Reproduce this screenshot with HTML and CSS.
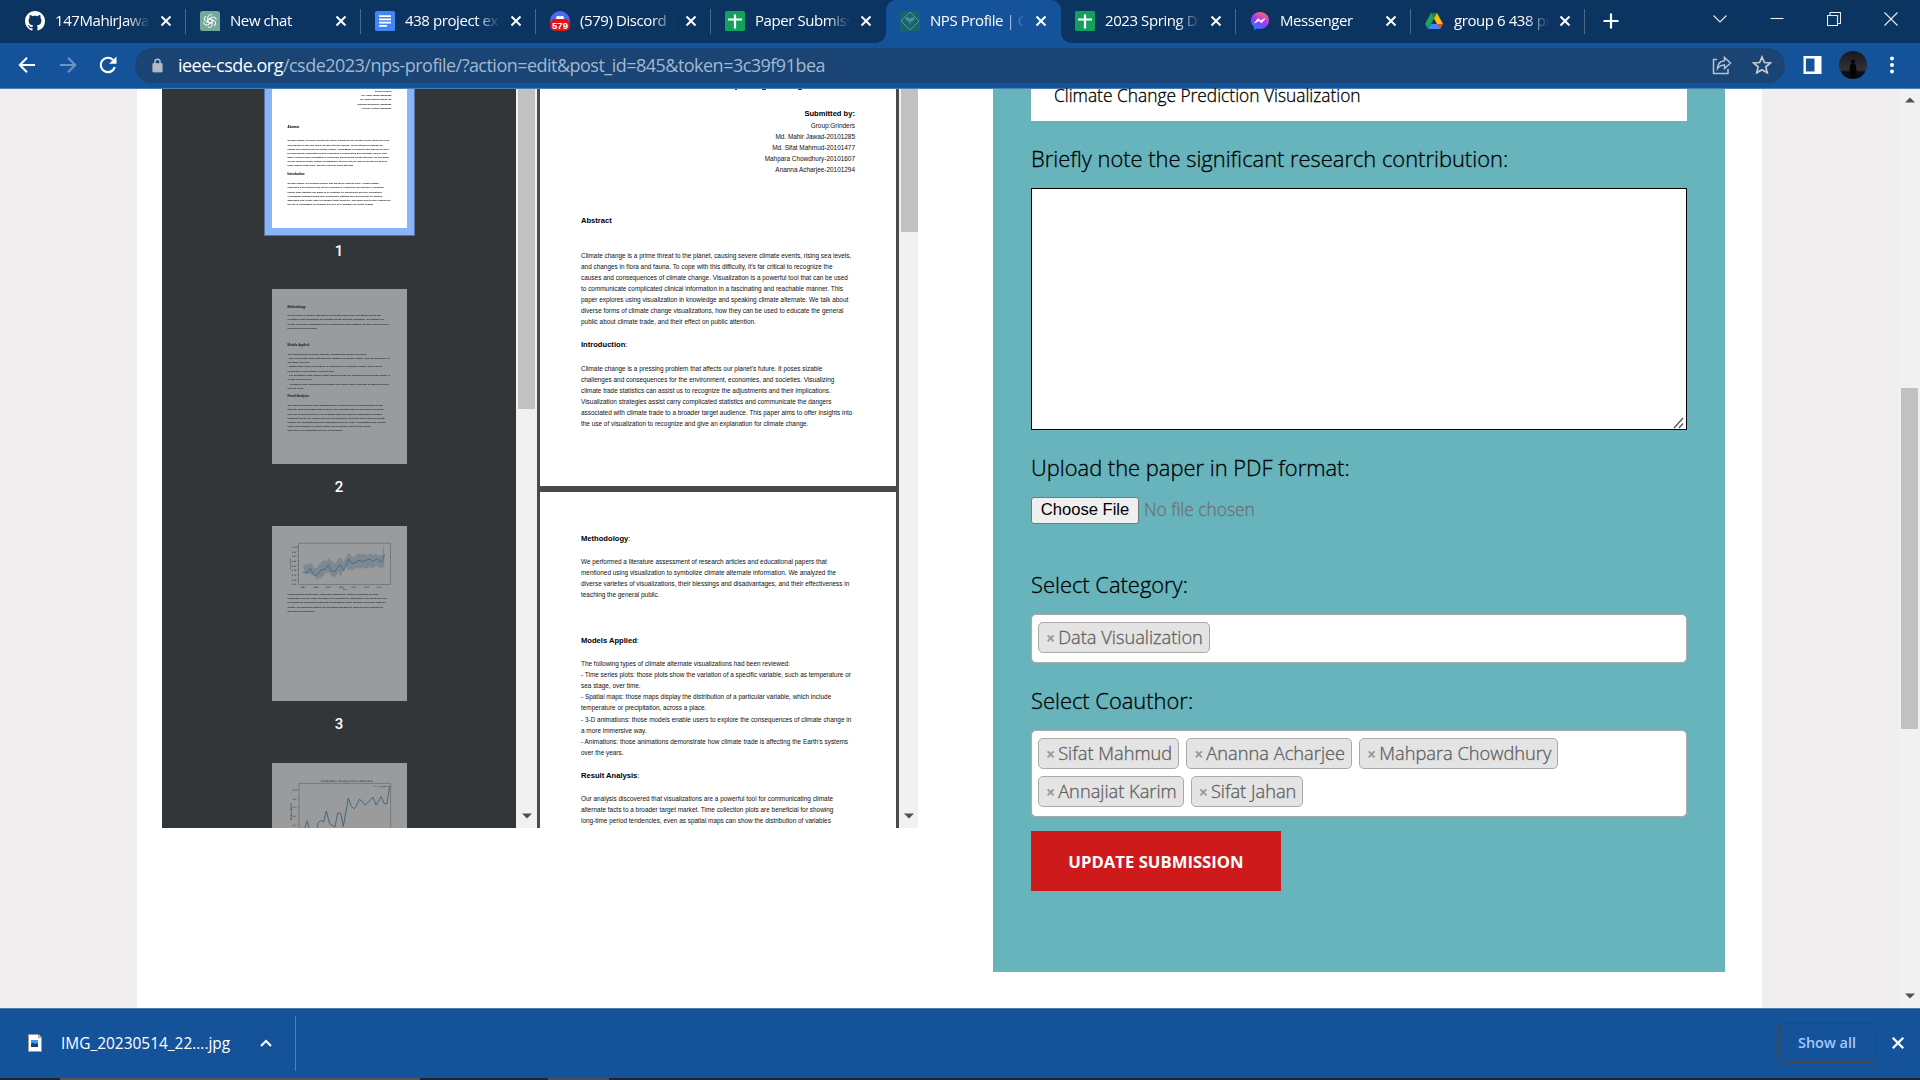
FILE: index.html
```html
<!DOCTYPE html>
<html lang="en">
<head>
<meta charset="utf-8">
<title>NPS Profile | CSDE</title>
<link rel="stylesheet" href="styles.css">
</head>
<body>
<svg width="0" height="0" class="defs">
  <symbol id="x" viewBox="0 0 12 12"><path d="M1.5 1.5l9 9M10.5 1.5l-9 9" stroke="#fff" stroke-width="2" fill="none"/></symbol>
  <symbol id="sheet" viewBox="0 0 20 20"><rect width="20" height="20" rx="1.5" fill="#12a15d"/><path d="M10 3.5v14M3 8.5h14" stroke="#fff" stroke-width="2.2"/></symbol>
  <symbol id="up" viewBox="0 0 10 6"><path d="M0 5.5L5 .5l5 5z" fill="#505050"/></symbol>
  <symbol id="down" viewBox="0 0 10 6"><path d="M0 .5l5 5 5-5z" fill="#505050"/></symbol>
</svg>
<div class="screen">
  <header class="tabs">
    <div class="tab"><svg class="fav" viewBox="0 0 16 16"><path fill="#fff" d="M8 0C3.58 0 0 3.58 0 8c0 3.54 2.29 6.53 5.47 7.59.4.07.55-.17.55-.38 0-.19-.01-.82-.01-1.49-2.01.37-2.53-.49-2.69-.94-.09-.23-.48-.94-.82-1.13-.28-.15-.68-.52-.01-.53.63-.01 1.08.58 1.23.82.72 1.21 1.87.87 2.33.66.07-.52.28-.87.51-1.07-1.78-.2-3.64-.89-3.64-3.95 0-.87.31-1.59.82-2.15-.08-.2-.36-1.02.08-2.12 0 0 .67-.21 2.2.82.64-.18 1.32-.27 2-.27s1.36.09 2 .27c1.53-1.04 2.2-.82 2.2-.82.44 1.1.16 1.92.08 2.12.51.56.82 1.27.82 2.15 0 3.07-1.87 3.75-3.65 3.95.29.25.54.73.54 1.48 0 1.07-.01 1.93-.01 2.2 0 .21.15.46.55.38A8.01 8.01 0 0 0 16 8c0-4.42-3.58-8-8-8z"/></svg><span class="title">147MahirJawad</span><svg class="close"><use href="#x"/></svg></div>
    <div class="tab"><svg class="fav" viewBox="0 0 20 20"><path d="M2.5 0h15A2.500 2.500 0 0 1 20 2.500V20H2.500A2.500 2.500 0 0 1 0 17.500v-15A2.500 2.500 0 0 1 2.500 0z" fill="#74a99b"/><g fill="none" stroke="#fff" stroke-width="1"><path id="petal" d="M10 7.600l2.200 1.200v4.700a2.800 2.800 0 0 1-4.300 2.400"/><use href="#petal" transform="rotate(60 10 10)"/><use href="#petal" transform="rotate(120 10 10)"/><use href="#petal" transform="rotate(180 10 10)"/><use href="#petal" transform="rotate(240 10 10)"/><use href="#petal" transform="rotate(300 10 10)"/></g></svg><span class="title">New chat</span><svg class="close"><use href="#x"/></svg></div>
    <div class="tab"><svg class="fav" viewBox="0 0 20 20"><rect width="20" height="20" rx="1.500" fill="#4285f4"/><path d="M4 5.200h12M4 8.400h12M4 11.600h12M4 14.800h8" stroke="#fff" stroke-width="1.700"/></svg><span class="title">438 project explan</span><svg class="close"><use href="#x"/></svg></div>
    <div class="tab"><svg class="fav" viewBox="0 0 20 20"><circle cx="10" cy="10" r="10" fill="#5865f2"/><path d="M6 8q0-3 2-3.200l2 .6 2-.6q2 .2 2 3.200z" fill="#fff"/><rect x="0" y="8" width="20" height="12" rx="5" fill="#e01414"/><text x="10" y="17.800" text-anchor="middle" class="badge">579</text></svg><span class="title">(579) Discord | #g</span><svg class="close"><use href="#x"/></svg></div>
    <div class="tab nosep"><svg class="fav"><use href="#sheet"/></svg><span class="title">Paper Submission</span><svg class="close"><use href="#x"/></svg></div>
    <div class="tab active"><svg class="fav" viewBox="0 0 20 20"><rect width="20" height="20" fill="#176570"/><path d="M10 1l9 9-9 9-9-9z" fill="none" stroke="#4f9a94"/><path d="M5 7l3-1 2 2 2-2 3 1-2 3-2 .5L10 14l-1-3.500L7 10z" fill="#4f8f92"/></svg><span class="title">NPS Profile | CSDE</span><svg class="close"><use href="#x"/></svg></div>
    <div class="tab"><svg class="fav"><use href="#sheet"/></svg><span class="title">2023 Spring DSc</span><svg class="close"><use href="#x"/></svg></div>
    <div class="tab"><svg class="fav" viewBox="0 0 20 20"><defs><linearGradient id="m" x1="0.200" y1="1" x2="0.700" y2="0"><stop offset="0" stop-color="#0a8cff"/><stop offset=".5" stop-color="#a033ff"/><stop offset="1" stop-color="#ff6968"/></linearGradient></defs><path d="M10 1C4.900 1 1 4.700 1 9.500c0 2.600 1.100 4.800 3 6.300V19l3-1.500c1 .3 2 .4 3 .4 5.100 0 9-3.700 9-8.500S15.100 1 10 1z" fill="url(#m)"/><path d="M4.600 12L8 7.500l2.700 2.200L15 7.500l-3.400 4.400-2.700-2.100z" fill="#fff" stroke="#fff" stroke-width=".6"/></svg><span class="title">Messenger</span><svg class="close"><use href="#x"/></svg></div>
    <div class="tab last"><svg class="fav" viewBox="0 0 20 20"><path d="M7 2L1 13l3 5 6-10.500z" fill="#1ea362"/><path d="M7 2h6l6 11h-6z" fill="#fbbc04"/><path d="M7 2h6l-3 5.500z" fill="#188038"/><path d="M7 13h12l-3 5H4z" fill="#4285f4"/><path d="M13 13h6l-3 5z" fill="#ea4335"/></svg><span class="title">group 6 438 proj</span><svg class="close"><use href="#x"/></svg></div>
    <svg class="plus" viewBox="0 0 16 16"><path d="M8 .5v15M.5 8h15" stroke="#fff" stroke-width="2.200"/></svg>
    <div class="winbtns">
      <svg viewBox="0 0 14 14"><path d="M.5 3.500L7 10l6.500-6.500"/></svg>
      <svg viewBox="0 0 14 14"><path d="M.5 6.500h13"/></svg>
      <svg viewBox="0 0 14 14"><path d="M.5 3.500h10v10H.5zM3 3.500V.5h10.500v11h-3"/></svg>
      <svg viewBox="0 0 14 14"><path d="M.5.5l13 13M13.500.5l-13 13"/></svg>
    </div>
  </header>
  <nav class="toolbar">
    <svg class="nav" viewBox="0 0 20 20"><path d="M18 10H3M10 2.800L2.800 10l7.200 7.200" stroke="#fff" stroke-width="2" fill="none"/></svg>
    <svg class="nav" viewBox="0 0 20 20"><path d="M2 10h15M10 2.800l7.200 7.200-7.200 7.200" stroke="#6f94c2" stroke-width="2" fill="none"/></svg>
    <svg class="nav" viewBox="0 0 20 20"><path d="M15.800 12.200a7.200 7.200 0 1 1-1.700-7.300" stroke="#fff" stroke-width="2.200" fill="none"/><path d="M17.500 1.500v7.300h-7.300z" fill="#fff"/></svg>
    <div class="omnibox">
      <svg class="lock" viewBox="0 0 12 15"><path d="M1 5.500h10V14.500H1z" fill="#b5bcc5" stroke="#b5bcc5" stroke-linejoin="round"/><path d="M3.200 6V3.500a2.800 2.800 0 0 1 5.600 0V6" fill="none" stroke="#b5bcc5" stroke-width="1.600"/></svg>
      <span class="url"><b>ieee-csde.org</b>/csde2023/nps-profile/?action=edit&amp;post_id=845&amp;token=3c39f91bea</span>
      <svg class="oicon" viewBox="0 0 20 20"><path d="M5 4.500H1.500v14H16V14M5.500 13.500c.3-5 3-7.500 7-7.700V2.500l6 5.500-6 5.500V10c-3 0-5 .8-7 3.500z" fill="none" stroke="#b9c3cf" stroke-width="1.500"/></svg>
      <svg class="oicon" viewBox="0 0 20 20"><path d="M10 2l2.400 5.500 6 .5-4.600 3.900 1.400 5.900-5.200-3.100-5.200 3.100 1.400-5.900L1.600 8l6-.5z" fill="none" stroke="#c3cbd4" stroke-width="1.700"/></svg>
    </div>
    <svg class="panel-icon" viewBox="0 0 18 18"><path d="M1.200 1.200h15.600v15.600H1.200z" fill="none" stroke="#fff" stroke-width="2.400"/><path d="M11 1h6v16h-6z" fill="#fff"/></svg>
    <svg class="avatar" viewBox="0 0 28 28"><defs><linearGradient id="night" x1="0" y1="0" x2="0" y2="1"><stop offset="0" stop-color="#171820"/><stop offset=".68" stop-color="#34303a"/><stop offset=".74" stop-color="#0e1114"/><stop offset="1" stop-color="#06090c"/></linearGradient></defs><circle cx="14" cy="14" r="14" fill="url(#night)"/><circle cx="14" cy="10.500" r="2" fill="#050506"/><path d="M11.500 13q2.500-1.500 5 0l1 6-1.500 8h-4l-1.500-8z" fill="#030304"/></svg>
    <svg class="menu" viewBox="0 0 6 18"><g fill="#fff"><circle cx="3" cy="2.500" r="2"/><circle cx="3" cy="9" r="2"/><circle cx="3" cy="15.500" r="2"/></g></svg>
  </nav>

  <main class="content">
    <div class="site">
      <section class="viewer">
        <div class="thumbs">
          <div class="thumb selected"><div class="clip"><article class="page">
            <div class="page1">
              <h3 class="by">Submitted by:</h3>
              <p class="right">Group:Grinders<br>Md. Mahir Jawad-20101285<br>Md. Sifat Mahmud-20101477<br>Mahpara Chowdhury-20101607<br>Ananna Acharjee-20101294</p>
              <h3 class="g40">Abstract</h3>
              <p class="g24">Climate change is a prime threat to the planet, causing severe climate events, rising sea levels,<br>and changes in flora and fauna. To cope with this difficulty, it's far critical to recognize the<br>causes and consequences of climate change. Visualization is a powerful tool that can be used<br>to communicate complicated clinical information in a fascinating and reachable manner. This<br>paper explores using visualization in knowledge and speaking climate alternate. We talk about<br>diverse forms of climate change visualizations, how they can be used to educate the general<br>public about climate trade, and their effect on public attention.</p>
              <h3 class="g11">Introduction<i>:</i></h3>
              <p class="g13">Climate change is a pressing problem that affects our planet's future. It poses sizable<br>challenges and consequences for the environment, economies, and societies. Visualizing<br>climate trade statistics can assist us to recognize the adjustments and their implications.<br>Visualization strategies assist carry complicated statistics and communicate the dangers<br>associated with climate trade to a broader target audience. This paper aims to offer insights into<br>the use of visualization to recognize and give an explanation for climate change.</p>
            </div></article></div></div>
          <span class="num n1">1</span>
          <div class="thumb dim"><div class="clip"><article class="page page2">
              <h3>Methodology<i>:</i></h3>
              <p class="g13">We performed a literature assessment of research articles and educational papers that<br>mentioned using visualization to symbolize climate alternate information. We analyzed the<br>diverse varieties of visualizations, their blessings and disadvantages, and their effectiveness in<br>teaching the general public.</p>
              <h3 class="g33">Models Applied<i>:</i></h3>
              <p class="g13">The following types of climate alternate visualizations had been reviewed:<br>- Time series plots: those plots show the variation of a specific variable, such as temperature or<br>sea stage, over time.<br>- Spatial maps: those maps display the distribution of a particular variable, which include<br>temperature or precipitation, across a place.<br>- 3-D animations: those models enable users to explore the consequences of climate change in<br>a more immersive way.<br>- Animations: those animations demonstrate how climate trade is affecting the Earth's systems<br>over the years.</p>
              <h3 class="g11">Result Analysis<i>:</i></h3>
              <p class="g13">Our analysis discovered that visualizations are a powerful tool for communicating climate<br>alternate facts to a broader target market. Time collection plots are beneficial for showing<br>long-time period tendencies, even as spatial maps can show the distribution of variables<br>throughout areas. 3-D models allow an extra immersive enjoyment of the effects of climate<br>change, and animations show the modifications over the years. Visualizations also increase<br>public consciousness of climate change and encourage people to take action.<br>Right here is an explanation of every of the graphs:</p>
            </article></div></div>
          <span class="num">2</span>
          <div class="thumb dim"><div class="clip"><article class="page chartpage">
            <svg class="chart" viewBox="0 0 405 195">
              <path d="M93 120l12-6 5 3 5-8 10 14 8 4 10-14 12-10 8 3 8-10 7 10 12 7 8-14 10-4 6 14 8-15 8-13 12 14 8-5 10-8 10 5 6-4 10 4 10-5 8 6 8-7 6 8 10-2 4-6 3-28 3 62-6 12-10-2-8-5-12 8-8-4-12 4-8-4-10 6-6-6-10 6-12 4-8-2-8-12-14 32-8-14-8 16-10-4-12-12-8 4-12 14-12 6-8-10-8-6-10-2-10 0z" fill="#c6dcec"/>
              <path d="M92 139h15l8-12 8 18 8 4 9-6 8-11 12-2 9-14 7 18 14 3 8-16 9-2 8 16 15-36 8 12 8 2 14-10 12 4 6-2 16-6 8 8 14-9 8 9h8l6-22" fill="none" stroke="#4d94c2" stroke-width="2.500"/>
              <path d="M79 52h277v124H79z" fill="none" stroke="#777" stroke-width="1.500"/>
              <path d="M79 63h-4M79 77h-4M79 91h-4M79 105h-4M79 119h-4M79 133h-4M79 147h-4M79 161h-4" stroke="#333"/>
              <g class="tick"><text x="59" y="66">10.00</text><text x="59" y="80">9.95</text><text x="59" y="94">9.90</text><text x="59" y="108">9.85</text><text x="59" y="122">9.80</text><text x="59" y="136">9.75</text><text x="59" y="150">9.70</text><text x="59" y="164">9.65</text><text x="59" y="178">9.60</text><text x="85" y="186">1980</text><text x="124" y="186">1985</text><text x="162" y="186">1990</text><text x="200" y="186">1995</text><text x="238" y="186">2000</text><text x="276" y="186">2005</text><text x="314" y="186">2010</text><text x="212" y="193">Year</text><text transform="translate(57 129) rotate(-90)">avg_temp</text></g>
            </svg>
            <p>Global common Temperature: This graph suggests the change in worldwide average<br>temperature over the years. The black line represents the temperature, even as the blue line<br>represents the temperature that could be anticipated if there had been no human impact on<br>climate. The distinction between the two traces indicates the effect of human activities on<br>international temperature.</p>
          </article></div></div>
          <span class="num">3</span>
          <div class="thumb dim"><div class="clip"><article class="page chartpage">
            <svg class="chart tall" viewBox="0 0 405 300">
              <path d="M86 195l10 8 10-30 10 50 12 15 11-60 8-6 8 5 8-33 10 38 16 10 8-42h9l8 40 15-85 9 26 9 6 7-10 8-18 8 5 9 13 24-25 9 24 16-25 9 21h8l8-54" fill="none" stroke="#3a85b5" stroke-width="2.500"/>
              <path d="M81 61h275v230H81z" fill="none" stroke="#777" stroke-width="1.500"/>
              <path d="M81 80h-5M81 107h-5M81 133h-5M81 159h-5M81 185h-5" stroke="#333"/><path d="M303 70h12" stroke="#1b6594"/>
              <g class="tick"><text x="147" y="58" class="ct">Temperature Changes from 1980-2013</text><text x="320" y="73">avg_temp</text><text x="62" y="83">10.0</text><text x="62" y="110">9.8</text><text x="62" y="136">9.6</text><text x="62" y="162">9.4</text><text x="62" y="188">9.2</text><text class="ct" transform="translate(59 171) rotate(-90)">Temperature</text></g>
            </svg>
          </article></div></div>
        </div>
        <div class="sbar"><div class="sthumb side"></div><svg class="arrow"><use href="#down"/></svg></div>
        <div class="pages">
          <article class="page first">
            <div class="page1">
              <div class="cut"><span></span><span></span><span></span></div>
              <h3 class="by">Submitted by:</h3>
              <p class="right">Group:Grinders<br>Md. Mahir Jawad-20101285<br>Md. Sifat Mahmud-20101477<br>Mahpara Chowdhury-20101607<br>Ananna Acharjee-20101294</p>
              <h3 class="g40">Abstract</h3>
              <p class="g24">Climate change is a prime threat to the planet, causing severe climate events, rising sea levels,<br>and changes in flora and fauna. To cope with this difficulty, it's far critical to recognize the<br>causes and consequences of climate change. Visualization is a powerful tool that can be used<br>to communicate complicated clinical information in a fascinating and reachable manner. This<br>paper explores using visualization in knowledge and speaking climate alternate. We talk about<br>diverse forms of climate change visualizations, how they can be used to educate the general<br>public about climate trade, and their effect on public attention.</p>
              <h3 class="g11">Introduction<i>:</i></h3>
              <p class="g13">Climate change is a pressing problem that affects our planet's future. It poses sizable<br>challenges and consequences for the environment, economies, and societies. Visualizing<br>climate trade statistics can assist us to recognize the adjustments and their implications.<br>Visualization strategies assist carry complicated statistics and communicate the dangers<br>associated with climate trade to a broader target audience. This paper aims to offer insights into<br>the use of visualization to recognize and give an explanation for climate change.</p>
            </div>
          </article>
          <article class="page page2">
            <h3>Methodology<i>:</i></h3>
            <p class="g13">We performed a literature assessment of research articles and educational papers that<br>mentioned using visualization to symbolize climate alternate information. We analyzed the<br>diverse varieties of visualizations, their blessings and disadvantages, and their effectiveness in<br>teaching the general public.</p>
            <h3 class="g33">Models Applied<i>:</i></h3>
            <p class="g13">The following types of climate alternate visualizations had been reviewed:<br>- Time series plots: those plots show the variation of a specific variable, such as temperature or<br>sea stage, over time.<br>- Spatial maps: those maps display the distribution of a particular variable, which include<br>temperature or precipitation, across a place.<br>- 3-D animations: those models enable users to explore the consequences of climate change in<br>a more immersive way.<br>- Animations: those animations demonstrate how climate trade is affecting the Earth's systems<br>over the years.</p>
            <h3 class="g11">Result Analysis<i>:</i></h3>
            <p class="g13">Our analysis discovered that visualizations are a powerful tool for communicating climate<br>alternate facts to a broader target market. Time collection plots are beneficial for showing<br>long-time period tendencies, even as spatial maps can show the distribution of variables</p>
          </article>
        </div>
        <div class="sbar right-bar"><div class="sthumb doc"></div><svg class="arrow"><use href="#down"/></svg></div>
      </section>
      <form class="panel">
        <div class="field">Climate Change Prediction Visualization</div>
        <label class="label">Briefly note the significant research contribution:</label>
        <textarea class="area"></textarea>
        <label class="label l2">Upload the paper in PDF format:</label>
        <div class="file"><button type="button" class="choose">Choose File</button><span>No file chosen</span></div>
        <label class="label l3">Select Category:</label>
        <div class="select"><span class="pill"><b>×</b>Data Visualization</span></div>
        <label class="label l4">Select Coauthor:</label>
        <div class="select two"><span class="pill"><b>×</b>Sifat Mahmud</span><span class="pill"><b>×</b>Ananna Acharjee</span><span class="pill"><b>×</b>Mahpara Chowdhury</span><span class="pill"><b>×</b>Annajiat Karim</span><span class="pill"><b>×</b>Sifat Jahan</span></div>
        <button type="button" class="submit">UPDATE SUBMISSION</button>
      </form>
    </div>
    <div class="sbar main-bar"><svg class="arrow"><use href="#up"/></svg><div class="sthumb main"></div><svg class="arrow"><use href="#down"/></svg></div>
  </main>

  <footer class="downloads">
    <svg class="fileicon" viewBox="0 0 14 18"><path d="M.5.5h10l3 3v14H.5z" fill="#fff" stroke="#999c9c"/><path d="M10.500.5v3h3" fill="#ddd" stroke="#999c9c"/><path d="M3 6h7v7H3z" fill="#3aa0e8"/><path d="M3 10l2-1.500 2 1.500 3-1v4H3z" fill="#124080"/></svg>
    <span class="fname">IMG_20230514_22....jpg</span>
    <svg class="chev" viewBox="0 0 12 8"><path d="M1 7l5-5 5 5" fill="none" stroke="#fff" stroke-width="2"/></svg>
    <span class="rule"></span>
    <span class="showall">Show all</span>
    <svg class="dclose"><use href="#x"/></svg>
  </footer>
  <div class="taskbar"><span class="t1"></span><span class="t2"></span></div>
</div>
</body>
</html>
```
FILE: styles.css
```css
* { box-sizing: border-box; }
body { margin: 0; font-family: "Open Sans", "Noto Sans", sans-serif; }
svg { display: block; flex: none; }
.defs { position: absolute; }
.screen { width: 1920px; height: 1080px; overflow: hidden; display: flex; flex-direction: column; }

/* tab strip */
.tabs { height: 43px; background: #0c3460; display: flex; padding-left: 11px; flex: none; }
.tab { width: 175px; height: 43px; display: flex; align-items: center; padding: 0 13px 2px 14px; position: relative; flex: none; }
.tab.last { width: 174px; padding-left: 13px; }
.tab::after { content: ""; position: absolute; right: 0; top: 9px; width: 1px; height: 25px; background: #4c6a8c; }
.tab.nosep::after, .tab.active::after { display: none; }
.tab.active { background: #14539a; border-radius: 10px 10px 0 0; }
.tab.active::before { content: ""; position: absolute; left: -10px; right: -10px; bottom: 0; height: 10px;
  background: radial-gradient(circle at 0 0, transparent 9.5px, #14539a 10px) left / 10px 10px no-repeat,
    radial-gradient(circle at 100% 0, transparent 9.5px, #14539a 10px) right / 10px 10px no-repeat; }
.fav { width: 20px; height: 20px; }
.badge { font: bold 9.500px "Liberation Sans", sans-serif; fill: #fff; }
.title { margin-left: 10px; width: 95px; overflow: hidden; white-space: nowrap; color: #fff; font-size: 15px; letter-spacing: -.42px; line-height: 22px; padding-bottom: 1px;
  -webkit-mask-image: linear-gradient(90deg, #000 75%, transparent 100%); mask-image: linear-gradient(90deg, #000 75%, transparent 100%); }
.close { width: 12px; height: 12px; margin-left: 10px; }
.plus { width: 16px; height: 16px; margin: 13px 0 0 18px; }
.winbtns { margin: 12px 22px 0 auto; display: flex; gap: 43px; }
.winbtns svg { width: 14px; height: 14px; fill: none; stroke: #e8edf3; stroke-width: 1.100; }

/* toolbar */
.toolbar { height: 46px; flex: none; background: #14539a; border-bottom: 1px solid #4a7db5; display: flex; align-items: center; padding: 0 25px 1px 17px; }
.nav { width: 20px; height: 20px; margin-right: 21px; }
.nav + .nav + .nav { margin-right: 16px; margin-left: 0; }
.omnibox { width: 1650px; height: 35px; border-radius: 18px; background: #194474; display: flex; align-items: center; padding: 0 13px 0 17px; }
.lock { width: 11px; height: 15px; }
.url { margin-left: 15px; font-size: 18px; letter-spacing: -.52px; color: #a3b8d0; white-space: nowrap; flex: 1; }
.url b { color: #fff; font-weight: 400; }
.oicon { width: 20px; height: 20px; margin-left: 20px; }
.panel-icon { width: 19px; height: 18px; margin-left: 18px; }
.avatar { width: 28px; height: 28px; margin-left: 17px; }
.menu { width: 6px; height: 18px; margin-left: 22px; }

/* page */
.content { height: 919px; flex: none; display: flex; background: #f0eeef; padding-left: 137px; }
.site { width: 1625px; background: #fff; display: flex; padding-left: 25px; align-items: flex-start; }
.sbar { background: #f1f1f1; width: 21px; display: flex; flex-direction: column; align-items: center; flex: none; }
.sthumb { width: 17px; background: #c1c1c1; }
.sthumb.side { height: 320px; }
.sthumb.doc { height: 143px; }
.sthumb.main { height: 341px; margin-top: 285px; }
.arrow { width: 10px; height: 6px; margin-top: auto; margin-bottom: 9px; }
.main-bar { margin-left: auto; }
.main-bar .arrow:first-child { margin: 8px 0 0; }

/* PDF viewer */
.viewer { width: 756px; height: 739px; overflow: hidden; display: flex; }
.thumbs { width: 354px; background: #323639; display: flex; flex-direction: column; padding-left: 102px; flex: none; }
.thumb { width: 151px; padding: 0 8px; flex: none; }
.thumb.selected { background: #8ab4f8; margin-top: -44px; padding: 7px 7px 8px 7px; height: 191px; border: 1px solid #56739f; }
.thumb.dim { opacity: .5; height: 175px; }
.clip { width: 135px; height: 175px; overflow: hidden; background: #fff; }
.clip .page { transform: scale(.3792); transform-origin: 0 0; -webkit-text-stroke: .12px #222; }
.num { width: 150px; height: 62px; padding-top: 16px; text-align: center; font: 500 15px/14px Roboto, sans-serif; color: #fff; flex: none; }
.num.n1 { height: 53px; padding-top: 8px; }
.pages { width: 362px; background: #484b4e; padding: 0 3px; display: flex; flex-direction: column; gap: 6px; flex: none; }
.right-bar { width: 19px; align-items: flex-end; }
.right-bar .arrow { margin-right: 4px; }
.page { width: 356px; height: 461px; background: #fff; color: #111; padding-left: 41px; flex: none; font: 6.430px/11.070px "Liberation Sans", Arial, sans-serif; white-space: nowrap; }
.page.first { margin-top: -64px; }
.page h3 { font-size: 7.600px; line-height: 11px; margin: 0; font-weight: 700; color: #000; }
.page h3 i { font-weight: 400; font-style: normal; }
.page p { margin: 0; }
.page1 { padding-top: 83px; width: 274px; line-height: 11px; }
.first .page1 { padding-top: 64px; }
.cut { height: 19px; display: flex; padding-left: 154px; }
.cut span { width: 2px; height: 1px; background: #333; }
.cut span + span { width: 4px; margin-left: 25px; }
.cut span + span + span { margin-left: 32px; }
.by, .right { text-align: right; }
.right { margin-top: 1px !important; }
.page h3.g40 { margin-top: 40px; }
.page p.g24 { margin-top: 24px; }
.page h3.g11 { margin-top: 12px; }
.page p.g13 { margin-top: 13px; }
.page2 { padding-top: 41px; }
.page2 p.g13 { margin-top: 12.200px; }
.page h3.g33 { margin-top: 34.600px; }
.chartpage { padding: 0; }
.chart { width: 356px; height: 171px; }
.chart.tall { height: 264px; }
.chartpage p { padding: 3px 0 0 41px; }
.tick { font: 6px "DejaVu Sans", sans-serif; fill: #222; -webkit-text-stroke: 0; }
.ct { font-size: 8px; }

/* submission form */
.panel { margin-left: 75px; width: 732px; height: 883px; background: #67b4bc; padding: 0 38px; display: flex; flex-direction: column; align-items: flex-start; font-weight: 300; -webkit-text-stroke: .3px currentColor; }
.field { width: 656px; height: 32px; background: #fff; padding-left: 23px; font-size: 17.350px; line-height: 13px; color: #000; flex: none; }
.label { font-size: 21.900px; line-height: 28px; color: #000; margin: 24px 0 0; white-space: nowrap; }
.area { width: 656px; height: 242px; margin: 15px 0 0; border: 1px solid #000; border-radius: 0; resize: none; flex: none;
  background: #fff url("data:image/svg+xml,%3Csvg xmlns='http://www.w3.org/2000/svg' width='12' height='12'%3E%3Cpath d='M1 11L10 1M6 11L10 6.500' stroke='%23555' stroke-width='1.300'/%3E%3C/svg%3E") right 1px bottom 0 no-repeat; }
.l2 { margin-top: 24px; }
.file { display: flex; align-items: center; gap: 5px; margin-top: 15px; height: 27px; font-size: 17.350px; color: #6b7274; line-height: 25px; }
.file span { padding-bottom: 2px; }
.choose { width: 108px; height: 27px; padding: 0 0 2px; border: 1px solid #767676; border-radius: 3px; background: #efefef; font: 16.600px "Liberation Sans", Arial, sans-serif; color: #000; -webkit-text-stroke: 0; }
.l3 { margin-top: 47px; }
.select { width: 656px; height: 49px; border: 1px solid #aaa; border-radius: 5px; background: #fff; padding: 7px 6px; margin-top: 15px; display: flex; flex-wrap: wrap; align-content: flex-start; gap: 7px; flex: none; }
.pill { height: 31px; border: 1px solid #aaa; border-radius: 5px; background: #e4e4e4; color: #606060; font-size: 18.250px; line-height: 28px; padding: 0 6px 0 7px; white-space: nowrap; }
.pill b { font-size: 16px; font-weight: 700; color: #999; margin-right: 3px; -webkit-text-stroke: 0; }
.l4 { margin-top: 24px; }
.two { height: 87px; padding-right: 90px; }
.submit { width: 250px; height: 60px; margin: 14px 0 0; padding: 0; border: 0; background: #cf1a1b; color: #fff; font: 700 16.700px "Open Sans", sans-serif; -webkit-text-stroke: 0; }

/* download shelf */
.downloads { height: 70px; flex: none; background: #14539a; border-top: 1px solid #4a7db5; display: flex; align-items: center; padding: 0 15px 1px 28px; }
.fileicon { width: 14px; height: 18px; }
.fname { margin-left: 19px; width: 172px; color: #fff; font-size: 15.450px; white-space: nowrap; }
.chev { width: 12px; height: 8px; margin-left: 27px; }
.rule { width: 1px; height: 55px; background: #4f80b8; margin-left: 23px; }
.showall { margin-left: auto; width: 98px; height: 40px; border: 1px solid #40444a; border-radius: 5px; color: #a5c8f8; font: 600 14.500px/37px "Open Sans", sans-serif; text-align: center; }
.dclose { width: 14px; height: 14px; margin-left: 15px; }
.taskbar { height: 2px; background: #1c2430; display: flex; flex: none; }
.t1 { width: 360px; margin-left: 60px; background: #5a5350; }
.t2 { width: 61px; margin-left: 128px; background: #4a4e58; }
```
